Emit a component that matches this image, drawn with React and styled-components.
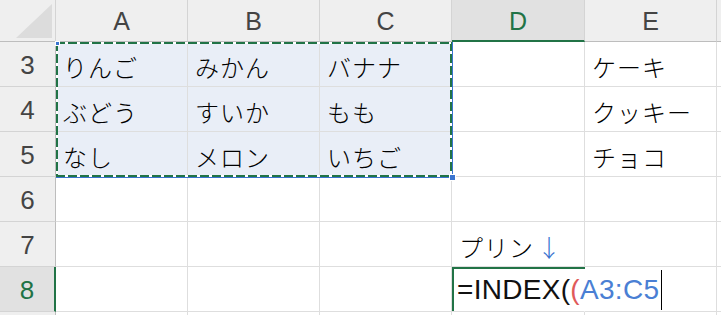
import React from "react";
import styled, { createGlobalStyle, css } from "styled-components";

const GlobalStyle = createGlobalStyle`
  html, body {
    margin: 0;
    padding: 0;
    background: #ffffff;
    overflow: hidden;
  }
`;

const GREEN = "#217346";
const BLUE = "#3a74cf";
const JP = `"Noto Sans CJK JP", "Noto Sans", sans-serif`;
const LATIN = `"Liberation Sans", Arial, "Noto Sans CJK JP", sans-serif`;

const Wrap = styled.div`
  position: relative;
  width: 721px;
  height: 315px;
  overflow: hidden;
`;

const Sheet = styled.div`
  display: grid;
  grid-template-columns: 56px 132px 132px 132px 133px 132px 40px;
  grid-template-rows: 42px repeat(7, 45px);
`;

const Corner = styled.div`
  position: relative;
  background: #efefef;
  border-right: 1px solid #d4d4d4;
  border-bottom: 1px solid #bdbdbd;
  box-sizing: border-box;

  &::after {
    content: "";
    position: absolute;
    right: 3px;
    bottom: 3px;
    width: 0;
    height: 0;
    border-left: 36px solid transparent;
    border-bottom: 34px solid #dcdcdc;
  }
`;

const ColHead = styled.div`
  display: flex;
  align-items: center;
  justify-content: center;
  box-sizing: border-box;
  background: ${(p) => (p.active ? "#e1e1e1" : "#efefef")};
  color: ${(p) => (p.active ? GREEN : "#444444")};
  border-right: 1px solid #d4d4d4;
  border-bottom: ${(p) => (p.active ? `2px solid ${GREEN}` : "1px solid #bdbdbd")};
  font-family: ${LATIN};
  font-size: 25px;
  padding-top: ${(p) => (p.active ? "2px" : "1px")};
`;

const RowHead = styled.div`
  display: flex;
  align-items: center;
  justify-content: center;
  box-sizing: border-box;
  background: ${(p) => (p.active ? "#e1e1e1" : "#efefef")};
  color: ${(p) => (p.active ? GREEN : "#444444")};
  border-right: ${(p) => (p.active ? `2px solid ${GREEN}` : "1px solid #bdbdbd")};
  border-bottom: 1px solid #d4d4d4;
  font-family: ${LATIN};
  font-size: 26px;
  padding-top: 3px;
`;

const Cell = styled.div`
  position: relative;
  display: flex;
  align-items: center;
  box-sizing: border-box;
  padding: 4px 0 0 7px;
  border-right: 1px solid #dedede;
  border-bottom: 1px solid #dedede;
  background: ${(p) => (p.selected ? "#e9eef7" : "#ffffff")};
  font-family: ${JP};
  font-size: 24px;
  font-weight: 300;
  letter-spacing: 1px;
  color: #000000;
  white-space: nowrap;

  ${(p) =>
    p.editing &&
    css`
      overflow: visible;
      z-index: 2;
      border-right-color: transparent;
      padding: 2px 0 0 5px;
      &::before {
        content: "";
        position: absolute;
        left: 0;
        top: 0;
        width: 133px;
        height: 100%;
        border-top: 2px solid ${GREEN};
        border-left: 2px solid ${GREEN};
        box-sizing: border-box;
      }
    `}
`;

const Arrow = styled.span`
  color: ${BLUE};
  margin-left: 3px;
`;

const Formula = styled.span`
  font-family: ${LATIN};
  font-size: 28px;
  letter-spacing: 0.3px;
  color: #111111;
  display: inline-flex;
  align-items: center;
`;

const Ref = styled.span`
  color: ${(p) => p.color};
`;

const Caret = styled.span`
  display: inline-block;
  width: 1px;
  height: 40px;
  margin-left: 2px;
  background: #000000;
`;

const CopyMarquee = styled.div`
  position: absolute;
  left: 56px;
  top: 42px;
  width: 397px;
  height: 136px;
  box-sizing: border-box;
  pointer-events: none;
  border-right: 1px solid ${BLUE};
  border-bottom: 1px solid ${BLUE};
  background:
    repeating-linear-gradient(90deg, ${GREEN} 0 9px, #ffffff 9px 12px) top left / calc(100% - 1px) 2px no-repeat,
    repeating-linear-gradient(90deg, ${GREEN} 0 9px, #ffffff 9px 12px) bottom left / calc(100% - 1px) 2px no-repeat,
    repeating-linear-gradient(180deg, ${GREEN} 0 9px, #ffffff 9px 12px) top left / 2px calc(100% - 1px) no-repeat,
    repeating-linear-gradient(180deg, ${GREEN} 0 9px, #ffffff 9px 12px) top right / 2px calc(100% - 1px) no-repeat;
`;

const Handle = styled.div`
  position: absolute;
  width: ${(p) => p.size}px;
  height: ${(p) => p.size}px;
  left: ${(p) => p.x}px;
  top: ${(p) => p.y}px;
  background: ${BLUE};
  box-shadow: 0 0 0 1px #ffffff;
  pointer-events: none;
`;

const columns = ["A", "B", "C", "D", "E"];

// row 9 only peeks in at the bottom edge, so its number is left off
const rows = [
  { n: 3, cells: ["りんご", "みかん", "バナナ", "", "ケーキ"] },
  { n: 4, cells: ["ぶどう", "すいか", "もも", "", "クッキー"] },
  { n: 5, cells: ["なし", "メロン", "いちご", "", "チョコ"] },
  { n: 6, cells: ["", "", "", "", ""] },
  { n: 7, cells: ["", "", "", "pudding", ""] },
  { n: 8, cells: ["", "", "", "formula", ""] },
  { n: 9, label: "", cells: ["", "", "", "", ""] },
];

function renderContent(value) {
  if (value === "pudding") {
    return (
      <>
        プリン<Arrow>↓</Arrow>
      </>
    );
  }
  if (value === "formula") {
    return (
      <Formula>
        =INDEX(<Ref color="#e05a5a">(</Ref>
        <Ref color="#4a7fd4">A3:C5</Ref>
        <Caret />
      </Formula>
    );
  }
  return value;
}

export default function App() {
  return (
    <Wrap>
      <GlobalStyle />
      <Sheet>
        <Corner />
        {columns.map((c) => (
          <ColHead key={c} active={c === "D"}>
            {c}
          </ColHead>
        ))}
        <ColHead />
        {rows.map((r) => (
          <React.Fragment key={r.n}>
            <RowHead active={r.n === 8}>{r.label ?? r.n}</RowHead>
            {r.cells.map((v, i) => (
              <Cell
                key={i}
                selected={r.n <= 5 && i < 3}
                editing={v === "formula"}
              >
                {renderContent(v)}
              </Cell>
            ))}
            <Cell />
          </React.Fragment>
        ))}
      </Sheet>
      <CopyMarquee />
      <Handle x={56} y={42} size={3} />
      <Handle x={450} y={175} size={5} />
    </Wrap>
  );
}
